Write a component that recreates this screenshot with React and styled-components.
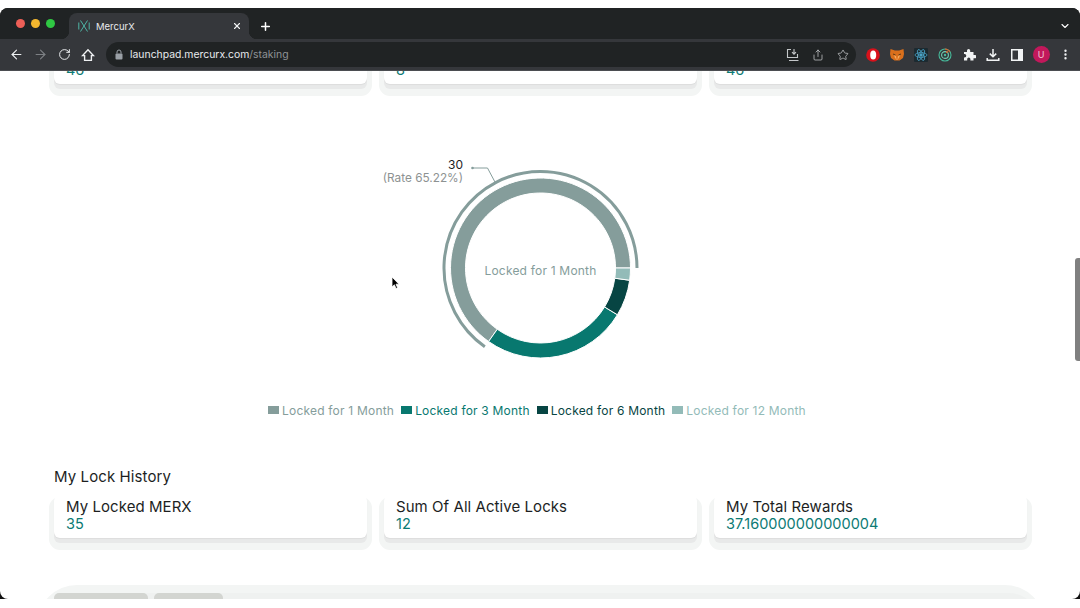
import React from 'react';
import styled, { createGlobalStyle } from 'styled-components';
import { ArrowLeft, ArrowRight, RotateCw, Share, Star, MoreVertical, X, Plus, ChevronDown } from 'lucide-react';

const GlobalStyle = createGlobalStyle`
  html, body { margin: 0; padding: 0; background: #fff; }
  * { box-sizing: border-box; }
  body { font-family: Inter, "Liberation Sans", sans-serif; }
`;

const Screen = styled.div`
  height: 608px;
  padding-top: 8px;
  overflow: hidden;
  background: #fff;
`;

const Window = styled.div`
  position: relative;
  height: 591px;
  overflow: hidden;
  display: flex;
  flex-direction: column;
  background: #111;
  border-radius: 8px 8px 0 0;
`;

const TabStrip = styled.div`
  height: 31px;
  flex: none;
  display: flex;
  align-items: flex-end;
  background: #202324;
  padding-right: 7px;
`;

const Lights = styled.div`
  width: 69px;
  height: 100%;
  flex: none;
  display: flex;
  align-items: center;
  gap: 6px;
  padding: 0 0 1px 16px;
`;

const Light = styled.span`
  width: 9px;
  height: 9px;
  border-radius: 50%;
  background: ${({ $color }) => $color};
`;

const Tab = styled.div`
  position: relative;
  width: 180px;
  height: 26px;
  flex: none;
  display: flex;
  align-items: center;
  padding: 0 7px 0 9px;
  background: #35373b;
  border-radius: 8px 8px 0 0;
  color: #e8eaed;
  &::before, &::after {
    content: '';
    position: absolute;
    bottom: 0;
    width: 8px;
    height: 8px;
  }
  &::before {
    left: -8px;
    background: radial-gradient(circle at 0 0, transparent 8px, #35373b 8.5px);
  }
  &::after {
    right: -8px;
    background: radial-gradient(circle at 100% 0, transparent 8px, #35373b 8.5px);
  }
`;

const TabTitle = styled.span`
  flex: 1;
  margin-left: 6px;
  font-size: 9.5px;
`;

const StripButton = styled.span`
  display: flex;
  align-items: center;
  justify-content: center;
  color: #fff;
  width: 16px;
  height: 26px;
  margin-left: ${({ $auto }) => ($auto ? 'auto' : '8px')};
`;

const Toolbar = styled.div`
  height: 32px;
  flex: none;
  display: flex;
  align-items: center;
  padding: 0 0 0 4px;
  background: #35373b;
  border-bottom: 1px solid #4b4d51;
`;

const Slot = styled.span`
  width: 24px;
  height: 24px;
  flex: none;
  display: flex;
  align-items: center;
  justify-content: center;
  color: ${({ $dim }) => ($dim ? '#7d8084' : '#eef0f2')};
`;

const Omnibox = styled.div`
  width: 750px;
  height: 25px;
  flex: none;
  margin: 0 5px 0 6px;
  display: flex;
  align-items: center;
  padding: 0 1px 0 8px;
  background: #202324;
  border-radius: 13px;
`;

const Url = styled.span`
  margin-left: 6px;
  font-size: 10.4px;
  color: #e8eaed;
  flex: 1;
`;

const UrlPath = styled.span`
  color: #8f9396;
`;

const OmniActions = styled.div`
  display: flex;
  gap: 1px;
`;

const Avatar = styled.span`
  width: 17px;
  height: 17px;
  border-radius: 50%;
  background: #c2185b;
  color: #f3c6d8;
  font-size: 9px;
  display: flex;
  align-items: center;
  justify-content: center;
`;

const Page = styled.main`
  position: relative;
  flex: 1;
  min-height: 0;
  overflow: hidden;
  background: #fff;
  border-radius: 0 0 8px 8px;
`;

const Scrolled = styled.div`
  margin-top: -30px;
`;

const CardRow = styled.div`
  display: grid;
  grid-template-columns: repeat(3, 313px);
  gap: 17px;
  padding-left: 54px;
`;

const Card = styled.div`
  height: 43px;
  padding: 2px 12px 0;
  background: #fff;
  border-radius: 6px;
  box-shadow: 0 1px 1px rgba(0, 0, 0, 0.05), 0 5px 0 0 #e8e9e9, 0 7px 0 5px #f3f5f4;
`;

const CardTitle = styled.div`
  font-size: 15px;
  line-height: 19px;
  letter-spacing: 0.06px;
  color: #1d1f1f;
`;

const CardValue = styled.div`
  font-size: 14.5px;
  line-height: 16px;
  color: #0c7a74;
`;

const ChartBlock = styled.div`
  display: flex;
  justify-content: center;
  margin-top: 66px;
`;

const Legend = styled.div`
  display: flex;
  justify-content: center;
  gap: 7px;
  margin-top: 23px;
  padding-right: 6px;
  height: 14px;
`;

const LegendItem = styled.div`
  display: flex;
  align-items: center;
  gap: 3px;
  font-size: 12px;
  line-height: 13px;
  letter-spacing: 0.2px;
  color: ${({ $color }) => $color};
`;

const Swatch = styled.span`
  width: 11px;
  height: 8px;
  background: ${({ $color }) => $color};
`;

const Heading = styled.h2`
  margin: 51px 0 9px 54px;
  font-size: 15px;
  line-height: 18px;
  letter-spacing: 0.1px;
  font-weight: 400;
  color: #1d1f1f;
`;

const BottomPanel = styled.section`
  margin: 47px 35px 0 37px;
  height: 40px;
  padding: 8px 6px 0;
  background: #f3f5f4;
  border-radius: 40px 40px 0 0;
`;

const PanelTabs = styled.div`
  display: flex;
  gap: 6px;
  height: 32px;
  padding: 0 11px;
  background: #eff1f0;
  border-radius: 30px 30px 0 0;
`;

const PanelTab = styled.div`
  width: ${({ $width }) => $width}px;
  height: 20px;
  background: #d3d5d1;
  border-radius: 5px 5px 0 0;
`;

const Scrollbar = styled.div`
  position: absolute;
  right: 0;
  top: 187px;
  width: 5px;
  height: 103px;
  background: #808080;
  border-radius: 3px 0 0 3px;
`;

const Cursor = styled.svg`
  position: absolute;
  left: 391px;
  top: 205px;
`;

const GREY = '#859d9b';
const TEAL = '#08786f';
const DARK = '#074543';
const LIGHT = '#93bbb8';

const slices = [
  { name: 'Locked for 1 Month', value: 30, color: GREY, text: GREY },
  { name: 'Locked for 3 Month', value: 12, color: TEAL, text: TEAL },
  { name: 'Locked for 6 Month', value: 3, color: DARK, text: DARK },
  { name: 'Locked for 12 Month', value: 1, color: LIGHT, text: LIGHT },
];

const CX = 180.5;
const CY = 118;

// angles run counter-clockwise from east, like the chart library does
const point = (r, deg) => {
  const a = (deg * Math.PI) / 180;
  return [CX + r * Math.cos(a), CY - r * Math.sin(a)];
};

const ringPath = (r0, r1, from, to) => {
  const [ax, ay] = point(r1, from);
  const [bx, by] = point(r1, to);
  const [cx, cy] = point(r0, to);
  const [dx, dy] = point(r0, from);
  const large = to - from > 180 ? 1 : 0;
  return `M${ax} ${ay}A${r1} ${r1} 0 ${large} 0 ${bx} ${by}L${cx} ${cy}A${r0} ${r0} 0 ${large} 1 ${dx} ${dy}Z`;
};

const arcPath = (r, from, to) => {
  const [ax, ay] = point(r, from);
  const [bx, by] = point(r, to);
  return `M${ax} ${ay}A${r} ${r} 0 ${to - from > 180 ? 1 : 0} 0 ${bx} ${by}`;
};

const total = slices.reduce((sum, s) => sum + s.value, 0);

const Donut = () => {
  let start = 0;
  return (
    <svg width="360" height="230" viewBox="0 0 360 230">
      {slices.map((s) => {
        const end = start + (s.value / total) * 360;
        const d = ringPath(75, 90, start, end);
        start = end;
        return <path key={s.name} d={d} fill={s.color} stroke="#fff" strokeWidth="1" />;
      })}
      <path d={arcPath(96.5, 0, (30 / total) * 360)} fill="none" stroke={GREY} strokeWidth="3" />
      <polyline points="112.5,18 127.5,18 135.5,33" fill="none" stroke={GREY} strokeWidth="1" />
      <circle cx="112.5" cy="18" r="1.3" fill={GREY} />
      <text x="103" y="19" textAnchor="end" fontSize="12" fill="#1d1f1f">30</text>
      <text x="103" y="32" textAnchor="end" fontSize="11.8" fill="#8d9292">(Rate 65.22%)</text>
      <text x={CX} y="125" textAnchor="middle" fontSize="12" letterSpacing="0.2" fill={GREY}>Locked for 1 Month</text>
    </svg>
  );
};

const Favicon = () => (
  <svg width="12" height="12" viewBox="0 0 12 12" fill="none" stroke="#4fb5a6" strokeWidth="1">
    <path d="M0.8 2.5V9.5M11.2 2.5V9.5" />
    <path d="M2.5 0.5L9.5 11.5M9.5 0.5L2.5 11.5" />
  </svg>
);

const LockIcon = () => (
  <svg width="10" height="11" viewBox="0 0 10 11" fill="#9aa0a6">
    <rect x="1.5" y="4.5" width="7" height="6" rx="1" />
    <path d="M3 4.5V3a2 2 0 0 1 4 0v1.5" fill="none" stroke="#9aa0a6" strokeWidth="1" />
  </svg>
);

const HomeIcon = () => (
  <svg width="14" height="14" viewBox="0 0 14 14" fill="none" stroke="#eef0f2" strokeWidth="1.4" strokeLinejoin="miter">
    <path d="M7 1.8L1.6 7.6H3.6V12.4H10.4V7.6H12.4Z" />
  </svg>
);

const InstallIcon = () => (
  <svg width="14" height="14" viewBox="0 0 14 14" fill="none" stroke="#c4c7c9" strokeWidth="1.1">
    <path d="M5 1.5H1.5V9.5H11.5V6" />
    <path d="M8 1V6M6 4.2L8 6.2L10 4.2" />
    <path d="M3 12.5H12.5" />
  </svg>
);

const OperaIcon = () => (
  <svg width="14" height="14" viewBox="0 0 14 14">
    <circle cx="7" cy="7" r="6.8" fill="#d8111b" />
    <ellipse cx="7.2" cy="7" rx="3" ry="4.6" fill="#fff" />
  </svg>
);

const FoxIcon = () => (
  <svg width="14" height="14" viewBox="0 0 14 14">
    <path d="M0.5 1L5 2.6H9L13.5 1L14 6L13 10L9.5 12.5H4.5L1 10L0 6Z" fill="#d96f1c" />
    <path d="M4 7L6 8L6.5 11H7.5L8 8L10 7L9 10L7 12L5 10Z" fill="#f6a95a" />
    <path d="M3 6L5.5 7M11 6L8.5 7" stroke="#5c3a16" strokeWidth="1" />
  </svg>
);

const ReactDevIcon = () => (
  <svg width="14" height="14" viewBox="0 0 14 14" fill="none" stroke="#4aa3c7" strokeWidth="0.8">
    <rect width="14" height="14" rx="1" fill="#1c2a30" stroke="none" />
    <ellipse cx="7" cy="7" rx="6" ry="2.4" />
    <ellipse cx="7" cy="7" rx="6" ry="2.4" transform="rotate(60 7 7)" />
    <ellipse cx="7" cy="7" rx="6" ry="2.4" transform="rotate(120 7 7)" />
    <circle cx="7" cy="7" r="1.3" fill="#4aa3c7" />
  </svg>
);

const RadarIcon = () => (
  <svg width="14" height="14" viewBox="0 0 14 14" fill="none" strokeWidth="1.1">
    <circle cx="7" cy="7" r="6" stroke="#46b99a" />
    <circle cx="7" cy="7" r="3.4" stroke="#6ed2b4" />
    <circle cx="7" cy="7" r="1.2" fill="#46b99a" stroke="none" />
    <path d="M7 1A6 6 0 0 1 12 4" stroke="#d9622b" />
    <circle cx="9" cy="4" r="1" fill="#d9622b" />
  </svg>
);

const PuzzleIcon = () => (
  <svg width="13" height="13" viewBox="0 0 13 13" fill="#f1f3f4">
    <path d="M1 4H4V2.6a1.6 1.6 0 0 1 3.2 0V4H10.5V7H12a1.6 1.6 0 0 1 0 3.2H10.5V12.5H7.4V11a1.6 1.6 0 0 0-3.2 0V12.5H1V9.4H1.6a1.7 1.7 0 0 0 0-3.4H1Z" />
  </svg>
);

const DownloadIcon = () => (
  <svg width="14" height="14" viewBox="0 0 14 14" fill="none" stroke="#f1f3f4" strokeWidth="1.5">
    <path d="M7 1V8.6M3.8 5.6L7 8.8L10.2 5.6" />
    <path d="M1.2 10V12.2H12.8V10" />
  </svg>
);

const SidePanelIcon = () => (
  <svg width="12" height="12" viewBox="0 0 12 12">
    <rect x="0.75" y="0.75" width="10.5" height="10.5" fill="none" stroke="#f1f3f4" strokeWidth="1.5" />
    <rect x="7" y="1" width="4" height="10" fill="#f1f3f4" />
  </svg>
);

const App = () => (
  <>
    <GlobalStyle />
    <Screen>
      <Window>
        <TabStrip>
          <Lights>
            <Light $color="#ed5f57" />
            <Light $color="#f4b72f" />
            <Light $color="#2fc843" />
          </Lights>
          <Tab>
            <Favicon />
            <TabTitle>MercurX</TabTitle>
            <X size={10} color="#f1f3f4" strokeWidth={2.6} />
          </Tab>
          <StripButton><Plus size={13} strokeWidth={2.8} /></StripButton>
          <StripButton $auto><ChevronDown size={12} strokeWidth={2.2} /></StripButton>
        </TabStrip>
        <Toolbar>
          <Slot><ArrowLeft size={15} strokeWidth={1.8} /></Slot>
          <Slot $dim><ArrowRight size={15} strokeWidth={1.8} /></Slot>
          <Slot><RotateCw size={13} strokeWidth={1.8} /></Slot>
          <Slot><HomeIcon /></Slot>
          <Omnibox>
            <LockIcon />
            <Url>launchpad.mercurx.com<UrlPath>/staking</UrlPath></Url>
            <OmniActions>
              <Slot><InstallIcon /></Slot>
              <Slot><Share size={12} color="#c4c7c9" strokeWidth={1.5} /></Slot>
              <Slot><Star size={12} color="#c4c7c9" strokeWidth={1.5} /></Slot>
            </OmniActions>
          </Omnibox>
          <Slot><OperaIcon /></Slot>
          <Slot><FoxIcon /></Slot>
          <Slot><ReactDevIcon /></Slot>
          <Slot><RadarIcon /></Slot>
          <Slot><PuzzleIcon /></Slot>
          <Slot><DownloadIcon /></Slot>
          <Slot><SidePanelIcon /></Slot>
          <Slot><Avatar>U</Avatar></Slot>
          <Slot><MoreVertical size={13} strokeWidth={2.4} /></Slot>
        </Toolbar>
        <Page>
          <Scrolled>
            <CardRow>
              <Card><CardTitle>Total Locked MERX</CardTitle><CardValue>46</CardValue></Card>
              <Card><CardTitle>Lockers</CardTitle><CardValue>8</CardValue></Card>
              <Card><CardTitle>Active Locks</CardTitle><CardValue>46</CardValue></Card>
            </CardRow>
            <ChartBlock><Donut /></ChartBlock>
            <Legend>
              {slices.map((s) => (
                <LegendItem key={s.name} $color={s.text}>
                  <Swatch $color={s.color} />
                  {s.name}
                </LegendItem>
              ))}
            </Legend>
            <Heading>My Lock History</Heading>
            <CardRow>
              <Card><CardTitle>My Locked MERX</CardTitle><CardValue>35</CardValue></Card>
              <Card><CardTitle>Sum Of All Active Locks</CardTitle><CardValue>12</CardValue></Card>
              <Card><CardTitle>My Total Rewards</CardTitle><CardValue>37.160000000000004</CardValue></Card>
            </CardRow>
            <BottomPanel>
              <PanelTabs>
                <PanelTab $width={94} />
                <PanelTab $width={69} />
              </PanelTabs>
            </BottomPanel>
          </Scrolled>
          <Scrollbar />
          <Cursor width="9" height="14" viewBox="0 0 9 14">
            <path d="M1 1V11L3.4 8.8L5 12.5L6.6 11.8L5 8.2H8Z" fill="#000" stroke="#fff" strokeWidth="0.8" />
          </Cursor>
        </Page>
      </Window>
    </Screen>
  </>
);

export default App;
